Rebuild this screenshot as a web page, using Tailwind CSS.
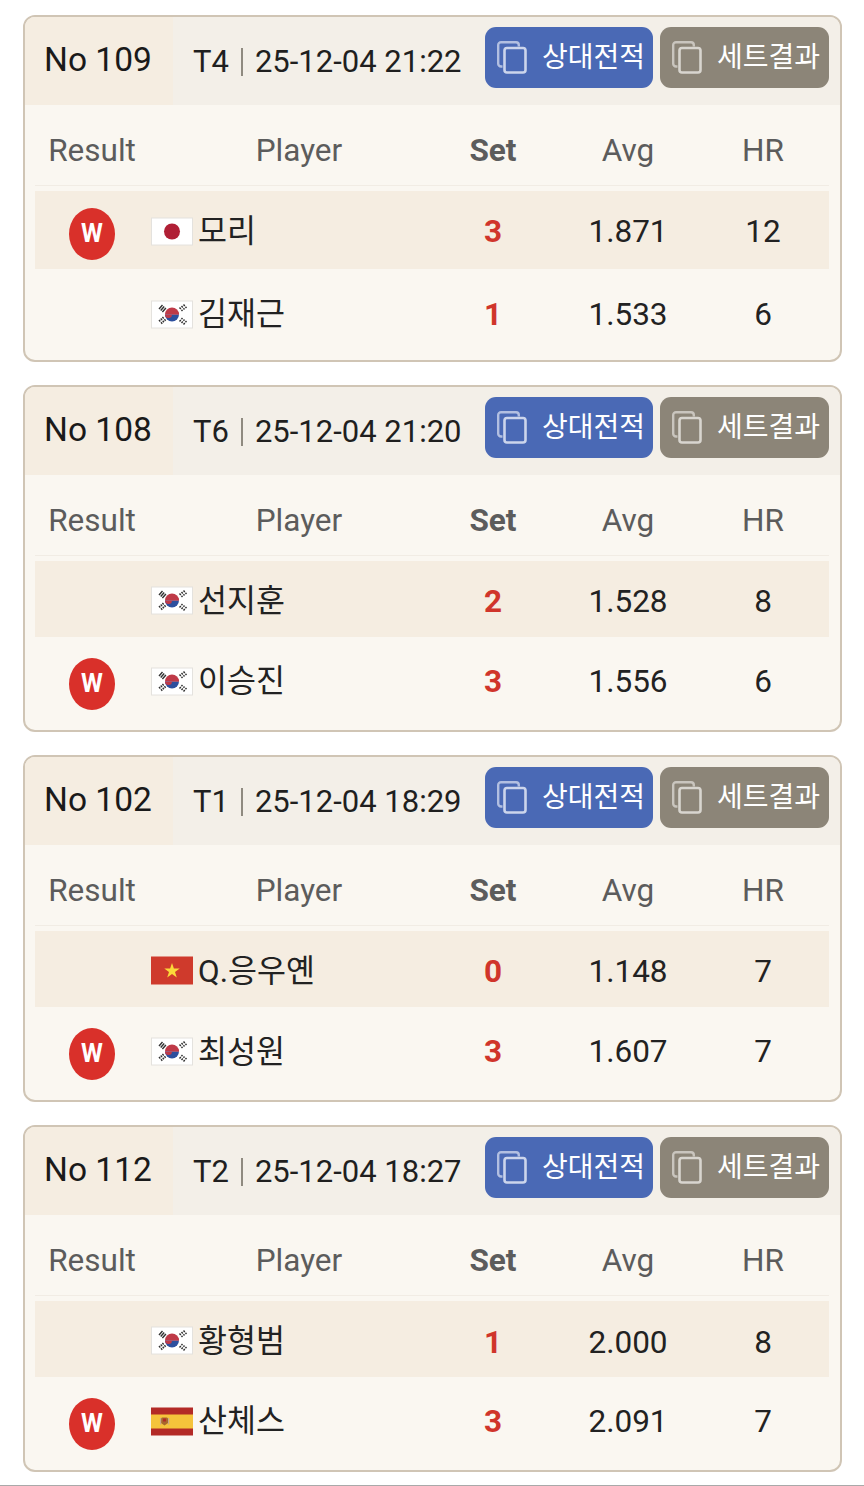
<!DOCTYPE html>
<html lang="ko">
<head>
    <meta charset="UTF-8">
    <meta name="viewport" content="width=device-width, initial-scale=1.0">
    <title>Match Results</title>
    <script src="https://cdn.jsdelivr.net/npm/@tailwindcss/browser@4"></script>
</head>
<body class="bg-white font-['Roboto','Noto_Sans_CJK_KR',sans-serif]">
    <!-- shared icons and flags -->
    <svg class="hidden">
        <symbol id="copy" viewBox="0 0 30 33">
            <path d="M5.500 25.500H4A2.800 2.800 0 0 1 1.200 22.700V4A2.800 2.800 0 0 1 4 1.200H19A2.800 2.800 0 0 1 21.800 4V5.500" fill="none" stroke="currentColor" stroke-width="2.400" opacity=".8"/>
            <rect x="7.500" y="7" width="21" height="24.500" rx="2.500" fill="none" stroke="currentColor" stroke-width="2.600"/>
        </symbol>
        <symbol id="flag-kr" viewBox="0 0 42 28">
            <rect x=".5" y=".5" width="41" height="27" fill="#fff" stroke="#e4e2de"/>
            <path d="M14 14a7 7 0 0 1 14 0z" fill="#bf3a48"/>
            <path d="M14 14a7 7 0 0 0 14 0z" fill="#2c4f9e"/>
            <path d="M14 14a3.500 3.500 0 0 0 7 0a3.500 3.500 0 0 1 7 0z" fill="#bf3a48"/>
            <g stroke="#333" stroke-width="1.400">
                <path d="M8 8.500l3.500-4M9.700 10l3.500-4M11.400 11.500l3.500-4"/>
                <path d="M28.500 7l3 3.500M30.500 5.500l3 3.500M32.500 4l3 3.500" stroke-dasharray="2 1"/>
                <path d="M8 19.500l3.500 4M9.700 18l3.500 4M11.400 16.500l3.500 4" stroke-dasharray="2 1"/>
                <path d="M28.500 21l3-3.500M30.500 22.500l3-3.500M32.500 24l3-3.500" stroke-dasharray="2 1"/>
            </g>
        </symbol>
        <symbol id="flag-jp" viewBox="0 0 42 28">
            <rect x=".5" y=".5" width="41" height="27" fill="#fff" stroke="#e4e2de"/>
            <circle cx="21" cy="14" r="8" fill="#b01f35"/>
        </symbol>
        <symbol id="flag-vn" viewBox="0 0 42 28">
            <rect width="42" height="28" fill="#cf3a2c"/>
            <path d="M21 6.500l1.900 5.500h5.800l-4.700 3.500 1.800 5.500-4.800-3.400-4.800 3.400 1.800-5.500-4.700-3.500h5.800z" fill="#fbd93a"/>
        </symbol>
        <symbol id="flag-es" viewBox="0 0 42 28">
            <rect width="42" height="28" fill="#b32a26"/>
            <rect y="7" width="42" height="14" fill="#f5c33b"/>
            <path d="M11 10h5l1 1v4.500l-3.500 2.500-3.500-2.500V11z" fill="#a8682c"/>
            <rect x="12" y="11" width="3" height="3" fill="#b32a26"/>
            <rect x="9" y="10.500" width="1.200" height="6.500" fill="#c9a98a"/>
            <rect x="17" y="10.500" width="1.200" height="6.500" fill="#c9a98a"/>
        </symbol>
    </svg>

    <div class="flex flex-col gap-[23px] pt-[15px] px-[23px] h-[1486px] border-b border-[#a9a9a9]">

        <!-- No 109 -->
        <section class="w-[819px] h-[347px] shrink-0 flex flex-col bg-[#faf7f1] border-2 border-[#d0c5b5] rounded-[12px] overflow-hidden">
            <div class="flex h-[88px] shrink-0 bg-[#f3efe8]">
                <div class="w-[148px] bg-[#f5ede1] pl-[19px] pb-[2px] flex items-center text-[33.5px] text-[#1a1a1a]">No 109</div>
                <div class="w-[312px] pl-[20px] pt-[2px] flex items-center text-[31px] text-[#1f1f1f] whitespace-nowrap">T4<span class="mx-[12px] w-[2px] h-[28px] bg-[#8f8a80]"></span>25-12-04 21:22</div>
                <div class="flex gap-[7px] pt-[10px]">
                    <a class="w-[168px] h-[61px] rounded-[11px] bg-[#4a69b5] text-white flex items-center pl-[12px] text-[28px] whitespace-nowrap"><svg class="w-[30px] h-[33px] mr-[15px] text-[#ccd5ec]"><use href="#copy"/></svg>상대전적</a>
                    <a class="w-[169px] h-[61px] rounded-[11px] bg-[#8c8578] text-white flex items-center pl-[12px] text-[28px] whitespace-nowrap"><svg class="w-[30px] h-[33px] mr-[15px] text-[#d8d5cf]"><use href="#copy"/></svg>세트결과</a>
                </div>
            </div>
            <div class="ml-[10px] w-[794px] pt-[12px] grid grid-cols-[114px_278px_132px_138px_132px] h-[81px] shrink-0 items-center text-center text-[31.5px] text-[#5c5c5c] border-b border-[#f1ece4]">
                <div>Result</div><div class="pl-[22px]">Player</div><div class="font-bold">Set</div><div>Avg</div><div>HR</div>
            </div>
            <div class="ml-[10px] w-[794px] mt-[5px] grid grid-cols-[114px_278px_132px_138px_132px] h-[78px] shrink-0 items-center text-center text-[31.5px] text-[#222] bg-[#f5ede1]">
                <div class="flex justify-center"><span class="w-[46px] h-[52px] mt-[8px] rounded-[50%] bg-[#d9302a] text-white text-[25px] font-bold flex items-center justify-center">W</span></div>
                <div class="flex items-center gap-[5px] pl-[2px] text-left"><svg class="w-[42px] h-[29px] mt-[2px]"><use href="#flag-jp"/></svg><span class="pt-[4px]">모리</span></div>
                <div class="font-bold text-[#d0352b] pt-[4px]">3</div><div class="pt-[4px]">1.871</div><div class="pt-[4px]">12</div>
            </div>
            <div class="ml-[10px] w-[794px] grid grid-cols-[114px_278px_132px_138px_132px] h-[88px] shrink-0 items-center text-center text-[31.5px] text-[#222]">
                <div></div>
                <div class="flex items-center gap-[5px] pl-[2px] text-left"><svg class="w-[42px] h-[29px] mt-[2px]"><use href="#flag-kr"/></svg><span class="pt-[4px]">김재근</span></div>
                <div class="font-bold text-[#d0352b] pt-[4px]">1</div><div class="pt-[4px]">1.533</div><div class="pt-[4px]">6</div>
            </div>
        </section>

        <!-- No 108 -->
        <section class="w-[819px] h-[347px] shrink-0 flex flex-col bg-[#faf7f1] border-2 border-[#d0c5b5] rounded-[12px] overflow-hidden">
            <div class="flex h-[88px] shrink-0 bg-[#f3efe8]">
                <div class="w-[148px] bg-[#f5ede1] pl-[19px] pb-[2px] flex items-center text-[33.5px] text-[#1a1a1a]">No 108</div>
                <div class="w-[312px] pl-[20px] pt-[2px] flex items-center text-[31px] text-[#1f1f1f] whitespace-nowrap">T6<span class="mx-[12px] w-[2px] h-[28px] bg-[#8f8a80]"></span>25-12-04 21:20</div>
                <div class="flex gap-[7px] pt-[10px]">
                    <a class="w-[168px] h-[61px] rounded-[11px] bg-[#4a69b5] text-white flex items-center pl-[12px] text-[28px] whitespace-nowrap"><svg class="w-[30px] h-[33px] mr-[15px] text-[#ccd5ec]"><use href="#copy"/></svg>상대전적</a>
                    <a class="w-[169px] h-[61px] rounded-[11px] bg-[#8c8578] text-white flex items-center pl-[12px] text-[28px] whitespace-nowrap"><svg class="w-[30px] h-[33px] mr-[15px] text-[#d8d5cf]"><use href="#copy"/></svg>세트결과</a>
                </div>
            </div>
            <div class="ml-[10px] w-[794px] pt-[12px] grid grid-cols-[114px_278px_132px_138px_132px] h-[81px] shrink-0 items-center text-center text-[31.5px] text-[#5c5c5c] border-b border-[#f1ece4]">
                <div>Result</div><div class="pl-[22px]">Player</div><div class="font-bold">Set</div><div>Avg</div><div>HR</div>
            </div>
            <div class="ml-[10px] w-[794px] mt-[5px] grid grid-cols-[114px_278px_132px_138px_132px] h-[76px] shrink-0 items-center text-center text-[31.5px] text-[#222] bg-[#f5ede1]">
                <div></div>
                <div class="flex items-center gap-[5px] pl-[2px] text-left"><svg class="w-[42px] h-[29px] mt-[2px]"><use href="#flag-kr"/></svg><span class="pt-[6px]">선지훈</span></div>
                <div class="font-bold text-[#d0352b] pt-[6px]">2</div><div class="pt-[6px]">1.528</div><div class="pt-[6px]">8</div>
            </div>
            <div class="ml-[10px] w-[794px] grid grid-cols-[114px_278px_132px_138px_132px] h-[86px] shrink-0 items-center text-center text-[31.5px] text-[#222]">
                <div class="flex justify-center"><span class="w-[46px] h-[52px] mt-[8px] rounded-[50%] bg-[#d9302a] text-white text-[25px] font-bold flex items-center justify-center">W</span></div>
                <div class="flex items-center gap-[5px] pl-[2px] text-left"><svg class="w-[42px] h-[29px] mt-[2px]"><use href="#flag-kr"/></svg><span class="pt-[4px]">이승진</span></div>
                <div class="font-bold text-[#d0352b] pt-[4px]">3</div><div class="pt-[4px]">1.556</div><div class="pt-[4px]">6</div>
            </div>
        </section>

        <!-- No 102 -->
        <section class="w-[819px] h-[347px] shrink-0 flex flex-col bg-[#faf7f1] border-2 border-[#d0c5b5] rounded-[12px] overflow-hidden">
            <div class="flex h-[88px] shrink-0 bg-[#f3efe8]">
                <div class="w-[148px] bg-[#f5ede1] pl-[19px] pb-[2px] flex items-center text-[33.5px] text-[#1a1a1a]">No 102</div>
                <div class="w-[312px] pl-[20px] pt-[2px] flex items-center text-[31px] text-[#1f1f1f] whitespace-nowrap">T1<span class="mx-[12px] w-[2px] h-[28px] bg-[#8f8a80]"></span>25-12-04 18:29</div>
                <div class="flex gap-[7px] pt-[10px]">
                    <a class="w-[168px] h-[61px] rounded-[11px] bg-[#4a69b5] text-white flex items-center pl-[12px] text-[28px] whitespace-nowrap"><svg class="w-[30px] h-[33px] mr-[15px] text-[#ccd5ec]"><use href="#copy"/></svg>상대전적</a>
                    <a class="w-[169px] h-[61px] rounded-[11px] bg-[#8c8578] text-white flex items-center pl-[12px] text-[28px] whitespace-nowrap"><svg class="w-[30px] h-[33px] mr-[15px] text-[#d8d5cf]"><use href="#copy"/></svg>세트결과</a>
                </div>
            </div>
            <div class="ml-[10px] w-[794px] pt-[12px] grid grid-cols-[114px_278px_132px_138px_132px] h-[81px] shrink-0 items-center text-center text-[31.5px] text-[#5c5c5c] border-b border-[#f1ece4]">
                <div>Result</div><div class="pl-[22px]">Player</div><div class="font-bold">Set</div><div>Avg</div><div>HR</div>
            </div>
            <div class="ml-[10px] w-[794px] mt-[5px] grid grid-cols-[114px_278px_132px_138px_132px] h-[76px] shrink-0 items-center text-center text-[31.5px] text-[#222] bg-[#f5ede1]">
                <div></div>
                <div class="flex items-center gap-[5px] pl-[2px] text-left"><svg class="w-[42px] h-[29px] mt-[2px]"><use href="#flag-vn"/></svg><span class="pt-[6px]">Q.응우옌</span></div>
                <div class="font-bold text-[#d0352b] pt-[6px]">0</div><div class="pt-[6px]">1.148</div><div class="pt-[6px]">7</div>
            </div>
            <div class="ml-[10px] w-[794px] grid grid-cols-[114px_278px_132px_138px_132px] h-[86px] shrink-0 items-center text-center text-[31.5px] text-[#222]">
                <div class="flex justify-center"><span class="w-[46px] h-[52px] mt-[8px] rounded-[50%] bg-[#d9302a] text-white text-[25px] font-bold flex items-center justify-center">W</span></div>
                <div class="flex items-center gap-[5px] pl-[2px] text-left"><svg class="w-[42px] h-[29px] mt-[2px]"><use href="#flag-kr"/></svg><span class="pt-[6px]">최성원</span></div>
                <div class="font-bold text-[#d0352b] pt-[4px]">3</div><div class="pt-[4px]">1.607</div><div class="pt-[4px]">7</div>
            </div>
        </section>

        <!-- No 112 -->
        <section class="w-[819px] h-[347px] shrink-0 flex flex-col bg-[#faf7f1] border-2 border-[#d0c5b5] rounded-[12px] overflow-hidden">
            <div class="flex h-[88px] shrink-0 bg-[#f3efe8]">
                <div class="w-[148px] bg-[#f5ede1] pl-[19px] pb-[2px] flex items-center text-[33.5px] text-[#1a1a1a]">No 112</div>
                <div class="w-[312px] pl-[20px] pt-[2px] flex items-center text-[31px] text-[#1f1f1f] whitespace-nowrap">T2<span class="mx-[12px] w-[2px] h-[28px] bg-[#8f8a80]"></span>25-12-04 18:27</div>
                <div class="flex gap-[7px] pt-[10px]">
                    <a class="w-[168px] h-[61px] rounded-[11px] bg-[#4a69b5] text-white flex items-center pl-[12px] text-[28px] whitespace-nowrap"><svg class="w-[30px] h-[33px] mr-[15px] text-[#ccd5ec]"><use href="#copy"/></svg>상대전적</a>
                    <a class="w-[169px] h-[61px] rounded-[11px] bg-[#8c8578] text-white flex items-center pl-[12px] text-[28px] whitespace-nowrap"><svg class="w-[30px] h-[33px] mr-[15px] text-[#d8d5cf]"><use href="#copy"/></svg>세트결과</a>
                </div>
            </div>
            <div class="ml-[10px] w-[794px] pt-[12px] grid grid-cols-[114px_278px_132px_138px_132px] h-[81px] shrink-0 items-center text-center text-[31.5px] text-[#5c5c5c] border-b border-[#f1ece4]">
                <div>Result</div><div class="pl-[22px]">Player</div><div class="font-bold">Set</div><div>Avg</div><div>HR</div>
            </div>
            <div class="ml-[10px] w-[794px] mt-[5px] grid grid-cols-[114px_278px_132px_138px_132px] h-[76px] shrink-0 items-center text-center text-[31.5px] text-[#222] bg-[#f5ede1]">
                <div></div>
                <div class="flex items-center gap-[5px] pl-[2px] text-left"><svg class="w-[42px] h-[29px] mt-[2px]"><use href="#flag-kr"/></svg><span class="pt-[6px]">황형범</span></div>
                <div class="font-bold text-[#d0352b] pt-[8px]">1</div><div class="pt-[8px]">2.000</div><div class="pt-[8px]">8</div>
            </div>
            <div class="ml-[10px] w-[794px] grid grid-cols-[114px_278px_132px_138px_132px] h-[86px] shrink-0 items-center text-center text-[31.5px] text-[#222]">
                <div class="flex justify-center"><span class="w-[46px] h-[52px] mt-[8px] rounded-[50%] bg-[#d9302a] text-white text-[25px] font-bold flex items-center justify-center">W</span></div>
                <div class="flex items-center gap-[5px] pl-[2px] text-left"><svg class="w-[42px] h-[29px] mt-[2px]"><use href="#flag-es"/></svg><span class="pt-[4px]">산체스</span></div>
                <div class="font-bold text-[#d0352b] pt-[4px]">3</div><div class="pt-[4px]">2.091</div><div class="pt-[4px]">7</div>
            </div>
        </section>
    </div>
</body>
</html>
